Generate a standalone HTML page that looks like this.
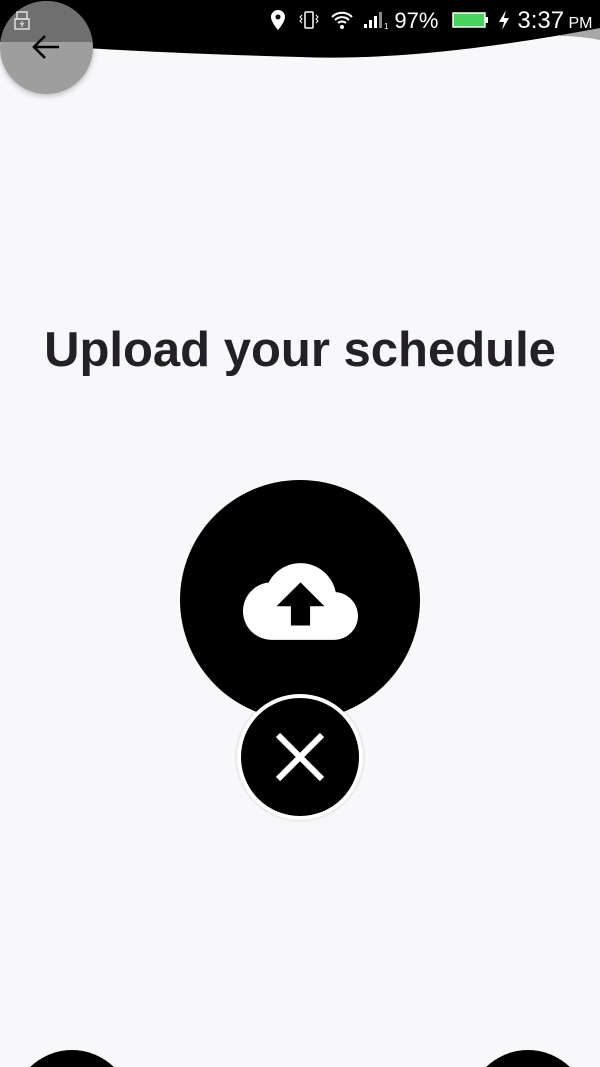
<!DOCTYPE html>
<html><head><style>
html,body{margin:0;padding:0;width:600px;height:1067px;overflow:hidden}
body{background:#f8f7fa;position:relative;font-family:"Liberation Sans",sans-serif}
.abs{position:absolute}
</style></head><body>
<svg class="abs" style="left:0;top:0" width="600" height="70">
<path d="M560 30 Q590 28 600 27 L600 40 Q580 36 560 36Z" fill="#a8a8a8"/>
<path d="M0 0 H600 V28 Q420 62 300 57 Q120 52 0 42 Z" fill="#000"/>
</svg>
<div class="abs" style="left:0;top:1px;width:93px;height:93px;border-radius:50%;background:#9e9e9e;box-shadow:0 2px 6px rgba(0,0,0,.25);overflow:hidden">
<div style="position:absolute;left:0;top:0;width:93px;height:41px;background:#6f6f6f"></div>
</div>
<svg class="abs" style="left:14px;top:10px" width="20" height="22" viewBox="0 0 20 22"><rect x="3" y="2" width="10" height="7" fill="none" stroke="#ddd" stroke-width="1.5"/><rect x="1" y="9" width="14" height="10" fill="none" stroke="#ddd" stroke-width="1.5"/><path d="M8 11v6M6 13l2 2 2-2" stroke="#ddd" fill="none"/></svg>
<svg class="abs" style="left:31px;top:33px" width="30" height="28" viewBox="0 0 30 28"><path d="M28 14H4M14 3L3 14l11 11" stroke="#000" stroke-width="2.6" fill="none"/></svg>
<div class="abs" style="left:270px;top:7px;color:#fff;font-size:22px;white-space:nowrap">
<svg width="16" height="22" viewBox="0 0 16 22" style="vertical-align:-3px"><path d="M8 1a7 7 0 0 0-7 7c0 5 7 13 7 13s7-8 7-13a7 7 0 0 0-7-7zm0 9.5a2.5 2.5 0 1 1 0-5 2.5 2.5 0 0 1 0 5z" fill="#fff"/></svg>
<svg width="22" height="22" viewBox="0 0 22 22" style="vertical-align:-3px;margin-left:6px"><rect x="7" y="3" width="8" height="16" rx="1" stroke="#fff" stroke-width="1.5" fill="none"/><path d="M4 6l-2 2 2 2-2 2 2 2M18 6l2 2-2 2 2 2-2 2" stroke="#fff" fill="none"/></svg>
<svg width="26" height="22" viewBox="0 0 26 22" style="vertical-align:-3px;margin-left:4px"><path d="M2 8a14 14 0 0 1 20 0M5 11a10 10 0 0 1 14 0M8 14a6 6 0 0 1 8 0" stroke="#fff" stroke-width="2" fill="none"/><circle cx="12" cy="18" r="2" fill="#fff"/></svg>
<svg width="30" height="22" viewBox="0 0 30 22" style="vertical-align:-3px"><rect x="2" y="15" width="3" height="4" fill="#fff"/><rect x="7" y="11" width="3" height="8" fill="#fff"/><rect x="12" y="7" width="3" height="12" fill="#fff"/><rect x="17" y="3" width="3" height="16" fill="#888"/><text x="22" y="20" font-size="8" fill="#fff">1</text></svg><span style="margin-left:2px">97%</span>
<svg width="40" height="22" viewBox="0 0 40 22" style="vertical-align:-3px;margin-left:6px"><rect x="2" y="4" width="32" height="14" fill="#47d45e" stroke="#fff" stroke-width="1.5"/><rect x="34" y="8" width="3" height="6" fill="#fff"/></svg>
<svg width="14" height="22" viewBox="0 0 14 22" style="vertical-align:-3px"><path d="M9 1L2 13h5l-2 8 7-12H7z" fill="#fff"/></svg><span style="font-size:24px"> 3:37</span><span style="font-size:16px"> PM</span>
</div>
<div class="abs" style="left:0;width:600px;top:322px;text-align:center;font-size:49px;font-weight:bold;color:#232127">Upload your schedule</div>
<div class="abs" style="left:180px;top:480px;width:240px;height:240px;border-radius:50%;background:#000"></div>
<svg class="abs" style="left:243px;top:544px" width="115" height="115" viewBox="0 0 24 24"><path fill="#fff" d="M19.35 10.04A7.49 7.49 0 0 0 12 4C9.11 4 6.6 5.64 5.35 8.04A5.994 5.994 0 0 0 0 14c0 3.31 2.69 6 6 6h13c2.76 0 5-2.24 5-5 0-2.64-2.05-4.78-4.65-4.96zM14 13v4h-4v-4H7l5-5 5 5h-3z"/></svg>
<div class="abs" style="left:237px;top:694px;width:118px;height:118px;border-radius:50%;background:#000;border:4px solid #fff;box-shadow:0 0 3px rgba(0,0,0,.2)"></div>
<svg class="abs" style="left:270px;top:727px" width="60" height="60" viewBox="0 0 60 60"><path d="M8 8L52 52M52 8L8 52" stroke="#fff" stroke-width="6"/></svg>
<div class="abs" style="left:12px;top:1050px;width:120px;height:17px;overflow:hidden"><div style="width:120px;height:120px;border-radius:50%;background:#000"></div></div>
<div class="abs" style="left:468px;top:1050px;width:120px;height:17px;overflow:hidden"><div style="width:120px;height:120px;border-radius:50%;background:#000"></div></div>
</body></html>
